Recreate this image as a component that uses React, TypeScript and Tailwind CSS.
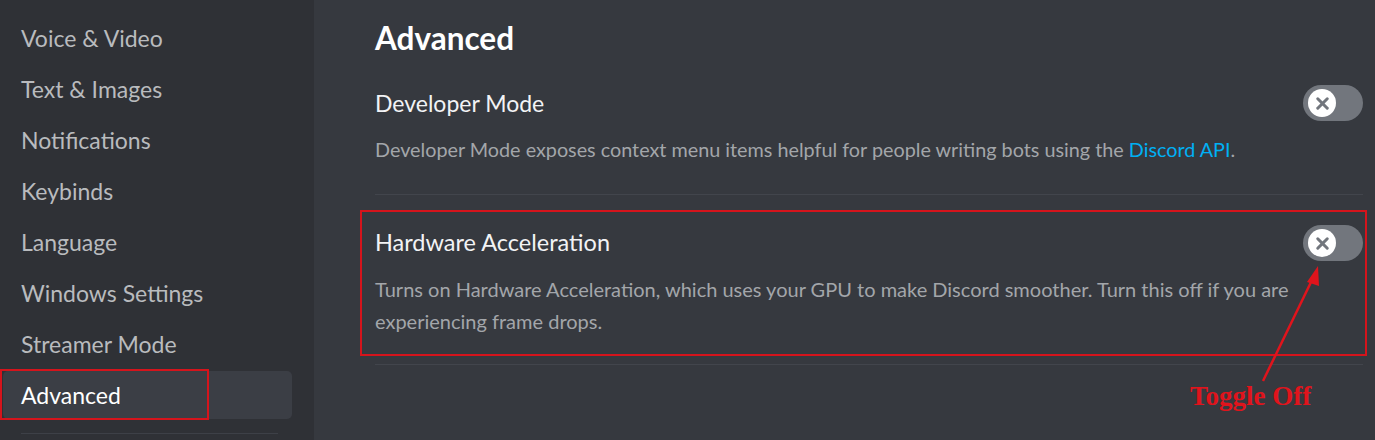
import { X } from 'lucide-react';

const navItems = [
  'Voice & Video',
  'Text & Images',
  'Notifications',
  'Keybinds',
  'Language',
  'Windows Settings',
  'Streamer Mode',
  'Advanced',
];

function Toggle() {
  return (
    <div className="flex items-center w-[60px] h-[36px] rounded-full bg-[#72767d] px-[5px] shrink-0">
      <div className="flex items-center justify-center w-[28px] h-[28px] rounded-full bg-white">
        <X className="w-[19px] h-[19px] text-[#72767d]" strokeWidth={3.8} />
      </div>
    </div>
  );
}

export default function App() {
  return (
    <div
      className="relative flex h-[440px] w-[1375px] overflow-hidden bg-[#36393f]"
      style={{ fontFamily: 'Lato, "Noto Sans", sans-serif' }}
    >
      {/* sidebar */}
      <div className="w-[314px] shrink-0 bg-[#2f3136] pt-[14px] flex flex-col gap-[3px]">
        {navItems.map((item) => (
          <div
            key={item}
            className={
              item === 'Advanced'
                ? 'relative ml-[3px] w-[289px] h-12 flex items-center pl-[18px] rounded-[5px] bg-[#3b3e45] text-white text-[23px]'
                : 'ml-[3px] w-[289px] h-12 flex items-center pl-[18px] text-[#b9bbbe] text-[23px]'
            }
          >
            {item}
            {item === 'Advanced' && (
              <div className="absolute left-[-3px] top-[-2px] w-[209px] h-[51px] border-2 border-[#d5141c]" />
            )}
          </div>
        ))}
        <div className="ml-[21px] mt-[11px] w-[257px] h-px bg-[#3d4047]" />
      </div>

      {/* main */}
      <div className="flex-1 pl-[61px] pr-[12px] pt-[18px] flex flex-col">
        <h1 className="text-[31.5px] font-bold text-white leading-[40px]">Advanced</h1>

        <div className="mt-[25px] flex flex-col">
          <div className="flex items-center justify-between h-[40px]">
            <span className="text-[23px] text-[#f2f3f5]">Developer Mode</span>
            <Toggle />
          </div>
          <p className="mt-[10px] text-[19.8px] text-[#a3a6aa] leading-[32px]">
            Developer Mode exposes context menu items helpful for people writing bots using the{' '}
            <span className="text-[#00b0f4]">Discord API</span>.
          </p>
          <div className="mt-[29px] h-px bg-[#42454c]" />
        </div>

        <div className="relative mt-[28px] flex flex-col">
          <div className="flex items-center justify-between h-[40px]">
            <span className="text-[23.5px] text-[#f2f3f5]">Hardware Acceleration</span>
            <Toggle />
          </div>
          <p className="mt-[10px] text-[20px] text-[#a3a6aa] leading-[32px] pr-[60px]">
            Turns on Hardware Acceleration, which uses your GPU to make Discord smoother. Turn this off if you
            are experiencing frame drops.
          </p>
          <div className="absolute left-[-15px] top-[-13px] w-[1007px] h-[146px] border-2 border-[#d5141c]" />
          <div className="mt-[27px] h-px bg-[#42454c]" />
        </div>
      </div>

      {/* annotation */}
      <svg className="absolute left-0 top-0 pointer-events-none" width="1375" height="440">
        <line x1="1263" y1="381" x2="1313" y2="278" stroke="#e0141c" strokeWidth="2.5" />
        <polygon points="1318,266 1307,282 1319,286" fill="#e0141c" />
      </svg>
      <div
        className="absolute left-[1190px] top-[383px] text-[27px] font-bold text-[#e0141c] leading-none"
        style={{ fontFamily: '"Liberation Serif", serif' }}
      >
        Toggle Off
      </div>
    </div>
  );
}
